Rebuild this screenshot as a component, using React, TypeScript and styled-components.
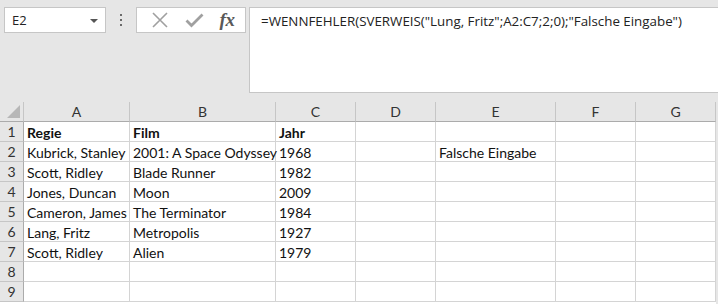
import styled, { createGlobalStyle } from "styled-components";

const GlobalStyle = createGlobalStyle`
  html, body {
    margin: 0;
    padding: 0;
    background: #e6e6e6;
  }
  body {
    font-family: "Lato", "Liberation Sans", sans-serif;
    width: 718px;
    height: 304px;
    overflow: hidden;
  }
`;

const Page = styled.div`
  display: flex;
  flex-direction: column;
  width: 718px;
  height: 304px;
  background: #e6e6e6;
`;

const FormulaBar = styled.div`
  display: flex;
  align-items: flex-start;
  padding: 7px 0 0 4px;
  height: 85px;
`;

const NameBox = styled.div`
  display: flex;
  align-items: center;
  justify-content: space-between;
  box-sizing: border-box;
  width: 102px;
  height: 26px;
  padding: 0 7px 0 7px;
  background: #fff;
  border: 1px solid #c6c6c6;
  font-family: "Open Sans", "Liberation Sans", sans-serif;
  font-size: 13px;
  color: #222;
`;

const Caret = styled.span`
  width: 0;
  height: 0;
  border-left: 4px solid transparent;
  border-right: 4px solid transparent;
  border-top: 4px solid #555;
  margin-top: 1px;
`;

const Dots = styled.div`
  display: flex;
  flex-direction: column;
  align-items: center;
  gap: 3px;
  width: 30px;
  padding-top: 7px;

  span {
    width: 2px;
    height: 2px;
    background: #6a6a6a;
  }
`;

const ButtonBox = styled.div`
  display: flex;
  align-items: center;
  box-sizing: border-box;
  width: 110px;
  height: 26px;
  padding: 0 0 0 6px;
  background: #fff;
  border: 1px solid #c6c6c6;
`;

const IconButton = styled.div<{ $w: number }>`
  display: flex;
  align-items: center;
  justify-content: center;
  width: ${(p) => p.$w}px;
  height: 24px;
`;

const Fx = styled.span`
  font-family: "Liberation Serif", "DejaVu Serif", serif;
  font-style: italic;
  font-weight: bold;
  font-size: 19px;
  color: #595959;
  letter-spacing: -0.5px;
  margin-left: 2px;
`;

const FormulaInput = styled.div`
  flex: 1;
  box-sizing: border-box;
  height: 86px;
  margin-left: 3px;
  padding: 4px 0 0 11px;
  background: #fff;
  border: 1px solid #c6c6c6;
  border-right: none;
  font-family: "Open Sans", "Liberation Sans", sans-serif;
  font-size: 13.35px;
  color: #222;
  white-space: nowrap;
`;

const Sheet = styled.div`
  margin-top: 10px;
  display: grid;
  grid-template-columns: 24px 106px 146px 80px 80px 120px 80px 80px;
  grid-auto-rows: 20px;
  background: #fff;
  width: 716px;
  flex: 1;
`;

const Corner = styled.div`
  position: relative;
  box-sizing: border-box;
  background: #e6e6e6;
  border-right: 1px solid #c6c6c6;
  border-bottom: 1px solid #ababab;

  &::after {
    content: "";
    position: absolute;
    right: 3px;
    bottom: 3px;
    width: 0;
    height: 0;
    border-left: 13px solid transparent;
    border-bottom: 13px solid #b7b7b7;
  }
`;

const ColHead = styled.div`
  box-sizing: border-box;
  display: flex;
  align-items: center;
  justify-content: center;
  background: #e6e6e6;
  border-right: 1px solid #c6c6c6;
  border-bottom: 1px solid #ababab;
  font-size: 14px;
  color: #333;
`;

const RowHead = styled.div`
  box-sizing: border-box;
  display: flex;
  align-items: center;
  justify-content: center;
  background: #e6e6e6;
  border-right: 1px solid #ababab;
  border-bottom: 1px solid #c6c6c6;
  font-size: 14px;
  color: #333;
`;

const Cell = styled.div<{ $bold?: boolean }>`
  box-sizing: border-box;
  display: flex;
  align-items: center;
  padding: 1px 0 0 3px;
  border-right: 1px solid #d4d4d4;
  border-bottom: 1px solid #d4d4d4;
  font-size: 14px;
  font-weight: ${(p) => (p.$bold ? 700 : 400)};
  color: #111;
  white-space: nowrap;
  overflow: visible;
`;

const columns = ["A", "B", "C", "D", "E", "F", "G"];

const rows: string[][] = [
  ["Regie", "Film", "Jahr", "", "", "", ""],
  ["Kubrick, Stanley", "2001: A Space Odyssey", "1968", "", "Falsche Eingabe", "", ""],
  ["Scott, Ridley", "Blade Runner", "1982", "", "", "", ""],
  ["Jones, Duncan", "Moon", "2009", "", "", "", ""],
  ["Cameron, James", "The Terminator", "1984", "", "", "", ""],
  ["Lang, Fritz", "Metropolis", "1927", "", "", "", ""],
  ["Scott, Ridley", "Alien", "1979", "", "", "", ""],
  ["", "", "", "", "", "", ""],
  ["", "", "", "", "", "", ""],
];

export default function App() {
  return (
    <Page>
      <GlobalStyle />
      <FormulaBar>
        <NameBox>
          E2
          <Caret />
        </NameBox>
        <Dots>
          <span />
          <span />
          <span />
        </Dots>
        <ButtonBox>
          <IconButton $w={34}>
            <svg width="16" height="16" viewBox="0 0 16 16">
              <path d="M1 1 L15 15 M15 1 L1 15" stroke="#a0a0a0" strokeWidth="1.6" />
            </svg>
          </IconButton>
          <IconButton $w={34}>
            <svg width="19" height="15" viewBox="0 0 19 15">
              <path d="M1.5 7.5 L6.5 12.5 L17.5 1.5" stroke="#a0a0a0" strokeWidth="2.8" fill="none" />
            </svg>
          </IconButton>
          <IconButton $w={30}>
            <Fx>fx</Fx>
          </IconButton>
        </ButtonBox>
        <FormulaInput>
          =WENNFEHLER(SVERWEIS("Lung, Fritz";A2:C7;2;0);"Falsche Eingabe")
        </FormulaInput>
      </FormulaBar>
      <Sheet>
        <Corner />
        {columns.map((c) => (
          <ColHead key={c}>{c}</ColHead>
        ))}
        {rows.map((r, i) => [
          <RowHead key={`h${i}`}>{i + 1}</RowHead>,
          ...r.map((v, j) => (
            <Cell key={`${i}-${j}`} $bold={i === 0}>
              {v}
            </Cell>
          )),
        ])}
      </Sheet>
    </Page>
  );
}
